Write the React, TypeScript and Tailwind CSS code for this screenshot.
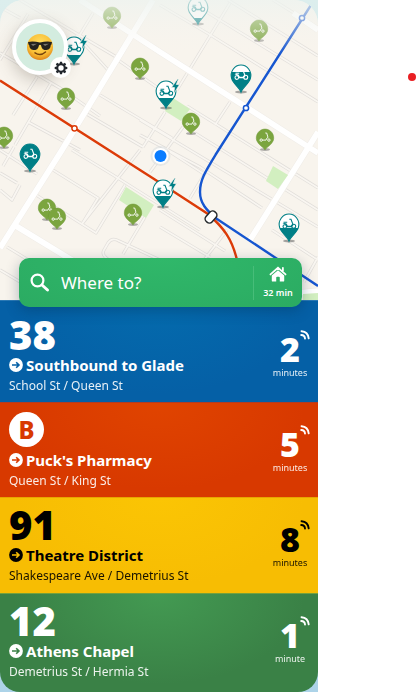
import React from "react";

type Route = {
  line: string;
  round?: boolean;
  title: string;
  stop: string;
  time: string;
  unit: string;
  style: string;
  badge?: string;
};

const routes: Route[] = [
  { line: "38", title: "Southbound to Glade", stop: "School St / Queen St", time: "2", unit: "minutes", style: "pt-[14px] h-[102px] text-white bg-[radial-gradient(ellipse_at_50%_0%,#046bad_0%,#0560a6_65%)] border-[#2b79b5]" },
  { line: "B", round: true, title: "Puck's Pharmacy", stop: "Queen St / King St", time: "5", unit: "minutes", style: "pt-[7px] h-[95px] text-white bg-[radial-gradient(ellipse_at_50%_0%,#e04400_0%,#d83900_65%)] border-[#b33c22]", badge: "text-[#d83900]" },
  { line: "91", title: "Theatre District", stop: "Shakespeare Ave / Demetrius St", time: "8", unit: "minutes", style: "pt-[7px] h-24 text-black bg-[radial-gradient(ellipse_at_50%_0%,#fbc504_0%,#f7bd03_65%)] border-[#e8a500]" },
  { line: "12", title: "Athens Chapel", stop: "Demetrius St / Hermia St", time: "1", unit: "minute", style: "pt-[7px] h-[99px] text-white bg-[radial-gradient(ellipse_at_50%_0%,#439a52_0%,#3a8146_65%)] border-[#75a03c] rounded-b-[20px]" },
];

const majorRoads =
  "M153 0L62 150L0 248M80 0L160 52L310 148L318 153M293 13L318 30M250 240L318 132M16 226L75 262M298 293L318 291";

const minorRoads =
  "M0 7L20 18M20 0L118 58M0 53L60 88L100 116M93 13L73 46M28 14L0 60M37 77L13 115M51 83L15 145M76 35L108 70M118 60L165 93M100 95L172 138M85 113L143 147M28 122L80 150M165 112L143 147" +
  "M160 5L212 36L318 102M187 0L318 80M228 0L318 56M273 0L318 28M230 3L177 90M230 102L215 125M187 106L318 188M195 133L318 210M140 120L318 227M140 135L200 167L262 208M183 127L150 172" +
  "M0 150L37 174M0 173L17 183M20 185L12 200L0 190M53 170L98 198L82 224M72 150L113 175L200 230M33 193L96 233L125 185M140 150L82 224M145 217L123 254M7 247L30 261M0 270L22 283M3 166L14 147" +
  "M170 152L204 174M272 230L318 260M160 210L225 251M160 227L210 257M210 165L190 198M227 230L204 260M318 257L304 282" +
  "M160 260L119 241Q112 237 108 243L104 250Q101 255 109 260L125 268";

function Roads() {
  return (
    <g fill="none" strokeLinejoin="round">
      <path d={minorRoads} stroke="#e1deda" strokeWidth="3.2" />
      <path d={minorRoads} stroke="#f9f6f1" strokeWidth="1.8" />
      <path d={majorRoads} stroke="#f1eee9" strokeWidth="6.8" />
      <path d={majorRoads} stroke="#fff" strokeWidth="5.6" />
    </g>
  );
}

function ScooterPin({ x, y }: { x: number; y: number }) {
  return (
    <g transform={`translate(${x} ${y})`}>
      <ellipse cx="0" cy="11.6" rx="5" ry="1.4" fill="#555" opacity=".45" />
      <path d="M0 12C-1 9.500-6.600 7.200-8.300 2.600A8.700 8.900 0 1 1 8.300 2.600C6.600 7.200 1 9.500 0 12Z" fill="#7ba53f" stroke="#6c9734" strokeWidth=".5" />
      <g fill="none" stroke="#fff" strokeWidth=".9">
        <circle cx="-3.8" cy="2.1" r="1.200" />
        <circle cx="3.900" cy="2.1" r="1.200" />
        <path d="M-2.6 2.1H1Q1.500-.2 3-.6L1.700-5H.3" />
      </g>
    </g>
  );
}

function Moped({ color }: { color: string }) {
  return (
    <g>
      <path d="M-6.500-.3Q-4.500-1.800-2.500-.5L-1.200 1.800H1.800L3.800-.3L4.500 1L2.600 3.200H-2.200Q-3-.2-6.500-.3Z" fill={color} />
      <g fill="none" stroke={color} strokeWidth="1.100">
        <circle cx="-4.200" cy="2.600" r="1.800" />
        <circle cx="4.700" cy="2.300" r="2" />
        <path d="M3.800 0L2-4.800H.3M-5.500-1.800H-1.800" />
      </g>
    </g>
  );
}

function BikePin({ x, y, level, bolt }: { x: number; y: number; level: number; bolt?: boolean }) {
  const id = `pin-${x}-${y}`;
  const shape = "M0 17C-1.500 12.500-7.800 9-9.400 3.400A9.800 10.400 0 1 1 9.400 3.400C7.800 9 1.500 12.500 0 17Z";
  return (
    <g transform={`translate(${x} ${y})`}>
      <ellipse cx="0" cy="17" rx="6" ry="1.5" fill="#555" opacity=".5" />
      <clipPath id={id}><path d={shape} /></clipPath>
      <path d={shape} fill="#fff" />
      <rect x="-10" y={level} width="20" height="30" fill="#007f86" clipPath={`url(#${id})`} />
      <path d={shape} fill="none" stroke="#007f86" strokeWidth="1.1" />
      <Moped color={level > 3 ? "#007f86" : "#fff"} />
      {bolt && <path d="M11.500-12L5.500-3.500H8.600L7.600 3L13.500-6.500H10.300L12.500-12Z" fill="#007f86" stroke="#f8f4ee" strokeWidth=".7" />}
    </g>
  );
}

function TransitMap() {
  return (
    <svg viewBox="0 0 318 300" preserveAspectRatio="xMidYMid slice" className="block h-full w-full" role="img" aria-label="Map of nearby transit">
      <defs>
        <linearGradient id="haze" x1="0" y1="0" x2="0" y2="1">
          <stop offset="0" stopColor="#edf3ef" stopOpacity=".8" />
          <stop offset="1" stopColor="#f8f4ee" stopOpacity="0" />
        </linearGradient>
      </defs>
      <rect width="318" height="300" fill="#f8f4ed" />
      <Roads />
      <g fill="#d2efc0">
        <path d="M126 187L154 205L146 218L119 200Z" />
        <path d="M303 294L318 293V300H303Z" />
        <path d="M273 166L288 175L278 189L266 181Z" />
        <path d="M173 98L190 109L181 121L165 111Z" />
      </g>
      <path d="M0 80.500L165 186L208 214C224 228 232 239 237 260" fill="none" stroke="#dc3b08" strokeWidth="2.4" />
      <path d="M311 5L216 154C205 172 200 180 200 192C200 203 206 210 217 219L318 286" fill="none" stroke="#1656d0" strokeWidth="2.4" />
      <circle cx="74.500" cy="128.300" r="2.6" fill="#fff" stroke="#dc3b08" strokeWidth="1.5" />
      <circle cx="302" cy="18" r="2.6" fill="#fff" stroke="#1656d0" strokeWidth="1.5" />
      <circle cx="246" cy="108" r="2.6" fill="#fff" stroke="#1656d0" strokeWidth="1.5" />
      <rect x="-6.5" y="-4" width="13" height="8" rx="3.500" transform="translate(211 217) rotate(-48)" fill="#fff" stroke="#25292c" strokeWidth="1.500" />
      <ScooterPin x={112} y={16} />
      <BikePin x={198} y={7} level={11} />
      <ScooterPin x={259} y={29} />
      <rect width="318" height="55" fill="url(#haze)" />
      <ScooterPin x={140} y={67} />
      <ScooterPin x={66} y={97} />
      <ScooterPin x={4} y={136} />
      <ScooterPin x={191} y={122} />
      <ScooterPin x={265} y={138} />
      <ScooterPin x={47} y={208} />
      <ScooterPin x={57} y={217} />
      <ScooterPin x={133} y={213} />
      <BikePin x={74} y={47} level={8} bolt />
      <BikePin x={241} y={75} level={-3} />
      <BikePin x={166} y={91} level={7} bolt />
      <BikePin x={30} y={154} level={-12} />
      <BikePin x={163} y={190} level={6} bolt />
      <BikePin x={289} y={224} level={4} />
      <circle cx="160.500" cy="156" r="10" fill="#d5dbe0" opacity=".5" />
      <circle cx="160.500" cy="156" r="8" fill="#fff" />
      <circle cx="160.500" cy="156" r="6" fill="#0a7cff" />
    </svg>
  );
}

function CoolFace() {
  return (
    <svg viewBox="0 0 26 26" className="size-[26px]" aria-hidden="true">
      <defs>
        <radialGradient id="face" cx=".5" cy=".35" r=".65">
          <stop offset="0" stopColor="#ffdf62" />
          <stop offset=".7" stopColor="#f9bd35" />
          <stop offset="1" stopColor="#df8519" />
        </radialGradient>
      </defs>
      <circle cx="13" cy="13" r="13" fill="url(#face)" />
      <path d="M1 8Q6 7 13 8.500Q20 7 25 8L24.500 10.500L23.800 11C23.500 15 21.500 16 18.500 16C15.500 16 14.500 13.500 14 11.200Q13 10.500 12 11.200C11.500 13.500 10.500 16 7.500 16C4.500 16 2.500 15 2.200 11L1.500 10.500Z" fill="#24221f" />
      <path d="M4 10L10 9.800L6 12ZM16 10L22 9.800L18 12Z" fill="#77736b" />
      <path d="M8 18.800Q13.500 22.500 18.500 18" fill="none" stroke="#75420c" strokeWidth="1.500" strokeLinecap="round" />
    </svg>
  );
}

function Gear() {
  return (
    <svg viewBox="-7 -7 14 14" className="size-[14px]" aria-hidden="true">
      <circle r="3.700" fill="none" stroke="#20252c" strokeWidth="2" />
      {[0, 45, 90, 135, 180, 225, 270, 315].map((angle) => (
        <path key={angle} d="M-1.500-4L-1-6.300H1L1.500-4Z" fill="#20252c" transform={`rotate(${angle})`} />
      ))}
    </svg>
  );
}

function SearchIcon() {
  return (
    <svg viewBox="0 0 20 20" className="ml-[11px] size-5 shrink-0" fill="none" stroke="#fff" aria-hidden="true">
      <circle cx="7.500" cy="7.500" r="5.900" strokeWidth="2.200" />
      <path d="M12 12L17.500 17" strokeWidth="3" strokeLinecap="round" />
    </svg>
  );
}

function HomeIcon() {
  return (
    <svg viewBox="0 0 20 18" className="h-[18px] w-5" aria-hidden="true">
      <path d="M1.500 9.500L10 2L18.500 9.500M15.500 2V6" fill="none" stroke="#fff" strokeWidth="2" strokeLinecap="round" />
      <path d="M3 10.700L10 4.700L17 10.700V16.500Q17 17.500 16 17.500H12V13Q12 12 11 12H9Q8 12 8 13V17.500H4Q3 17.500 3 16.500Z" fill="#fff" />
    </svg>
  );
}

function ArrowIcon() {
  return (
    <svg viewBox="0 0 14 14" className="size-[14px] shrink-0" aria-hidden="true">
      <defs>
        <mask id="arrow">
          <rect width="14" height="14" fill="#fff" />
          <path d="M3 7H10M7.200 4.200L10 7L7.200 9.800" fill="none" stroke="#000" strokeWidth="1.600" />
        </mask>
      </defs>
      <circle cx="7" cy="7" r="6.900" fill="currentColor" mask="url(#arrow)" />
    </svg>
  );
}

function LiveIcon() {
  return (
    <svg viewBox="0 0 10 10" className="absolute -top-px -right-2.5 size-2.5" fill="none" stroke="currentColor" strokeLinecap="round" aria-hidden="true">
      <path d="M1.500 1.200Q8 1.800 8.700 8.300" strokeWidth="1.900" />
      <path d="M1.200 5Q4.800 5.200 5 8.500" strokeWidth="1.900" />
    </svg>
  );
}

function RouteRow({ route }: { route: Route }) {
  return (
    <li>
      <button type="button" className={`flex w-full items-start justify-between border-t pr-[11px] pl-[9px] text-left ${route.style}`}>
        <span className="flex min-w-0 flex-col">
          <span className="flex h-[39px] items-center">
            {route.round ? (
              <span className={`flex size-[35px] items-center justify-center rounded-full bg-white text-2xl font-extrabold ${route.badge}`}>{route.line}</span>
            ) : (
              <span className="text-[40px] leading-[38px] font-black">{route.line}</span>
            )}
          </span>
          <span className="flex h-[22px] items-center gap-[3px] text-[15px] font-bold whitespace-nowrap">
            <ArrowIcon />
            {route.title}
          </span>
          <span className="text-xs leading-5 whitespace-nowrap opacity-90">{route.stop}</span>
        </span>
        <span className="flex w-[34px] flex-col items-center pt-4">
          <span className="relative text-[34px] leading-9 font-black">
            {route.time}
            <LiveIcon />
          </span>
          <span className="text-[9px] leading-3 opacity-90">{route.unit}</span>
        </span>
      </button>
    </li>
  );
}

export default function App() {
  return (
    <div className="flex min-h-screen bg-white font-['Noto_Sans','Open_Sans',sans-serif]">
      <main className="min-w-0 flex-1 bg-linear-to-b from-[#dceeed] to-[#acd3e8]">
        <section className="relative h-[300px]">
          <div className="h-full overflow-hidden rounded-t-[24px]">
            <TransitMap />
          </div>
          <button type="button" aria-label="Profile" className="absolute top-[19px] left-3 flex size-14 items-center justify-center rounded-full border-4 border-white bg-[#d3ecdf] shadow-[0_5px_16px_rgba(90,80,65,0.3)]">
            <CoolFace />
          </button>
          <button type="button" aria-label="Settings" className="absolute top-[57px] left-[50px] flex size-[21px] items-center justify-center rounded-full bg-white">
            <Gear />
          </button>
          <div className="absolute inset-x-0 top-[258px] mr-4 ml-[19px] flex h-[49px] items-center rounded-[10px] bg-[radial-gradient(ellipse_at_50%_0%,#30b86a,#2bab62)] text-white shadow-[0_4px_14px_rgba(0,35,65,0.3)]">
            <SearchIcon />
            <input aria-label="Where to?" placeholder="Where to?" className="ml-[11px] min-w-0 flex-1 bg-transparent text-[17px] outline-none placeholder:text-white" />
            <button type="button" className="flex h-[34px] w-[49px] flex-col items-center justify-center border-l border-[#47bd79]">
              <HomeIcon />
              <span className="pt-1 text-[9px] leading-[14px] font-semibold whitespace-nowrap">32 min</span>
            </button>
          </div>
        </section>
        <ul>
          {routes.map((route) => (
            <RouteRow key={route.line} route={route} />
          ))}
        </ul>
      </main>
      <aside className="flex w-[100px] justify-end pt-[73px] pr-0.5">
        <span className="size-2 rounded-full bg-[#e91f23]" />
      </aside>
    </div>
  );
}
